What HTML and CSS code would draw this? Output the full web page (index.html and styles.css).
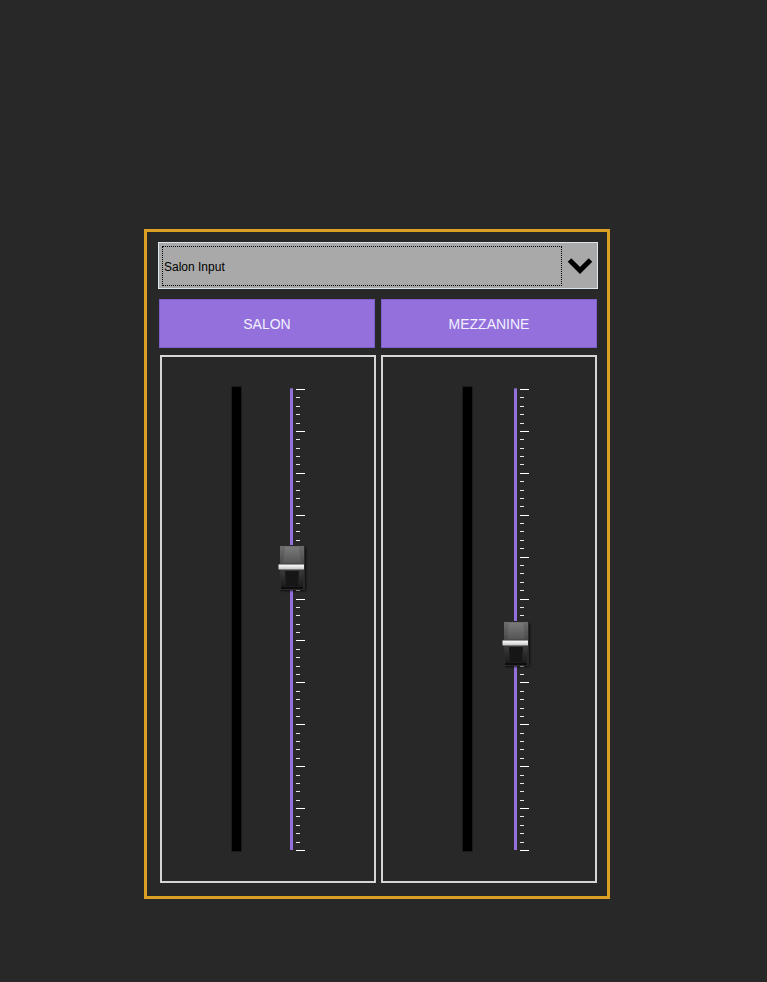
FILE: index.html
```html
<!DOCTYPE html>
<html>
<head>
<meta charset="utf-8">
<link rel="stylesheet" href="styles.css">
</head>
<body>
<div class="frame">
  <div class="select">
    <div class="select-value">Salon Input</div>
    <div class="select-arrow">
      <svg width="26" height="18" viewBox="0 0 26 18"><path d="M2.5 3 L13 13.5 L23.5 3" fill="none" stroke="#000" stroke-width="5" stroke-linejoin="miter"/></svg>
    </div>
  </div>
  <div class="tabs">
    <div class="tab">SALON</div>
    <div class="tab">MEZZANINE</div>
  </div>
  <div class="panels">
    <div class="panel panel-a">
      <div class="meter"></div>
      <div class="slider">
        <div class="track"></div>
        <div class="ticks"></div>
        <svg class="knob" style="top:158px" width="30" height="48" viewBox="0 0 30 48">
          <defs>
            <linearGradient id="kt" x1="0" y1="0" x2="0" y2="1"><stop offset="0" stop-color="#6e6e6e"/><stop offset="1" stop-color="#484848"/></linearGradient>
            <linearGradient id="ki" x1="0" y1="0" x2="0" y2="1"><stop offset="0" stop-color="#7a7a7a"/><stop offset="1" stop-color="#555555"/></linearGradient>
            <linearGradient id="kb" x1="0" y1="0" x2="0" y2="1"><stop offset="0" stop-color="#3a3a3a"/><stop offset="1" stop-color="#1c1c1c"/></linearGradient>
            <linearGradient id="kw" x1="0" y1="0" x2="0" y2="1"><stop offset="0" stop-color="#ffffff"/><stop offset="1" stop-color="#c4c4c4"/></linearGradient>
            <filter id="ks" x="-30%" y="-30%" width="160%" height="160%"><feGaussianBlur stdDeviation="1.3"/></filter>
            <filter id="kf" x="-10%" y="-10%" width="120%" height="120%"><feGaussianBlur stdDeviation="0.5"/></filter>
          </defs>
          <rect x="2" y="2" width="26" height="44" rx="2" fill="#000" opacity="0.7" filter="url(#ks)"/>
          <g filter="url(#kf)">
            <rect x="1" y="0" width="26" height="45" rx="1.5" fill="#2c2c2c"/>
            <path d="M2 1 H26 L26 19 H2 Z" fill="url(#kt)"/>
            <path d="M7 2 H21 L23 18 H5 Z" fill="url(#ki)"/>
            <path d="M2 25 H26 L25 42 H3 Z" fill="url(#kb)"/>
            <path d="M7 26 H21 L20 41 H8 Z" fill="#161616"/>
            <rect x="3" y="42" width="22" height="2" fill="#111"/>
          </g>
          <rect x="0.5" y="19.5" width="25.5" height="5" fill="url(#kw)"/>
        </svg>
      </div>
    </div>
    <div class="panel panel-b">
      <div class="meter"></div>
      <div class="slider">
        <div class="track"></div>
        <div class="ticks"></div>
        <svg class="knob" style="top:234px" width="30" height="48" viewBox="0 0 30 48">
          <rect x="2" y="2" width="26" height="44" rx="2" fill="#000" opacity="0.7" filter="url(#ks)"/>
          <g filter="url(#kf)">
            <rect x="1" y="0" width="26" height="45" rx="1.5" fill="#2c2c2c"/>
            <path d="M2 1 H26 L26 19 H2 Z" fill="url(#kt)"/>
            <path d="M7 2 H21 L23 18 H5 Z" fill="url(#ki)"/>
            <path d="M2 25 H26 L25 42 H3 Z" fill="url(#kb)"/>
            <path d="M7 26 H21 L20 41 H8 Z" fill="#161616"/>
            <rect x="3" y="42" width="22" height="2" fill="#111"/>
          </g>
          <rect x="0.5" y="19.5" width="25.5" height="5" fill="url(#kw)"/>
        </svg>
      </div>
    </div>
  </div>
</div>
</body>
</html>
```

FILE: styles.css
```css
html, body {
  margin: 0;
  padding: 0;
  background: #282828;
  font-family: "Liberation Sans", Arial, sans-serif;
}

.frame {
  margin: 229px 0 0 144px;
  width: 466px;
  height: 670px;
  box-sizing: border-box;
  border: 3px solid #d9a021;
  padding: 10px 0 0 11px;
}

.select {
  width: 440px;
  height: 47px;
  box-sizing: border-box;
  border: 1px solid #dce4ec;
  background: #a9a9a9;
  display: flex;
  padding: 3px 0 2px 3px;
}

.select-value {
  width: 400px;
  height: 40px;
  box-sizing: border-box;
  border: 1px dotted #000;
  font-size: 12px;
  color: #000;
  line-height: 41px;
  padding-left: 1px;
}

.select-arrow {
  flex: 1;
  display: flex;
  align-items: center;
  justify-content: center;
  padding-bottom: 1px;
  padding-left: 1px;
}

.select-arrow svg {
  display: block;
}

.tabs {
  display: flex;
  gap: 6px;
  margin: 10px 0 0 1px;
}

.tab {
  width: 216px;
  height: 49px;
  box-sizing: border-box;
  background: #9370db;
  border: 1px solid #7f5fcc;
  color: #f2f0ff;
  font-size: 14px;
  display: flex;
  align-items: center;
  justify-content: center;
}

.panels {
  display: flex;
  gap: 5px;
  margin: 7px 0 0 2px;
}

.panel {
  width: 216px;
  height: 528px;
  box-sizing: border-box;
  border: 2px solid #d6d6d6;
  display: flex;
  align-items: flex-start;
  padding-top: 30px;
}

.meter {
  width: 9px;
  height: 464px;
  background: #000;
  box-shadow: 0 0 0 1px #1c1c1c;
}

.panel-a .meter { margin-left: 70px; }
.panel-b .meter { margin-left: 80px; }

.slider {
  position: relative;
  display: flex;
  align-items: flex-start;
  width: 30px;
  height: 466px;
}

.panel-a .slider { margin-left: 37px; }
.panel-b .slider { margin-left: 30px; }

.track {
  margin: 2px 0 0 12px;
  width: 3px;
  height: 461px;
  background: #9370db;
  box-shadow: 0 -1px 0 #6a5a8a;
}

.ticks {
  margin: 2px 0 0 3px;
  width: 9px;
  height: 462px;
  background-image:
    repeating-linear-gradient(to bottom, #ffffff 0 1px, transparent 1px 41.909px),
    repeating-linear-gradient(to bottom, #e8e8e8 0 1px, transparent 1px 8.3818px);
  background-size: 9px 100%, 4px 100%;
  background-repeat: no-repeat;
}

.knob {
  position: absolute;
  left: 0;
  display: block;
}
```
